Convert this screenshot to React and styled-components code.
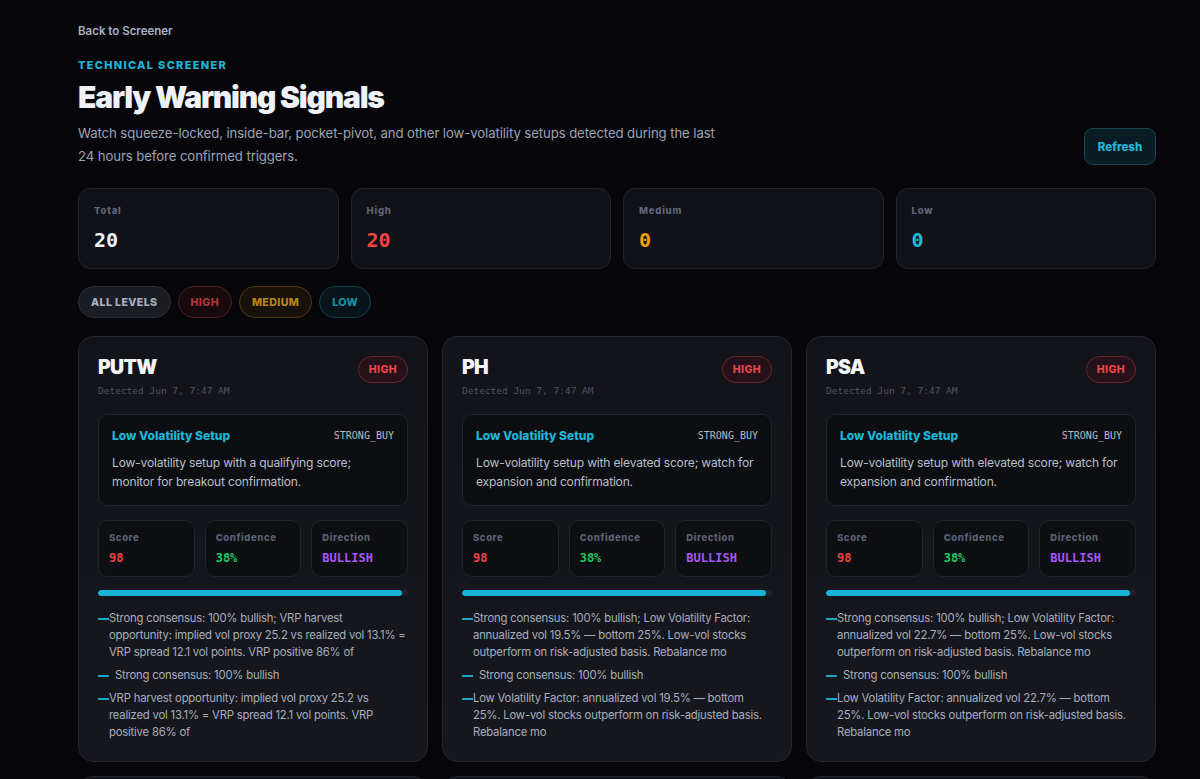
import React from 'react'
import styled, { createGlobalStyle } from 'styled-components'

const GlobalStyle = createGlobalStyle`
    * { box-sizing: border-box; }
    body {
        margin: 0;
        background: #07070b;
        font-family: Inter, "Noto Sans", sans-serif;
        color: #e6e9f0;
    }
`

const MONO = `"DejaVu Sans Mono", "Liberation Mono", monospace`

const stats = [
    { label: "Total", value: "20", color: "#eef1f6" },
    { label: "High", value: "20", color: "#ef4444" },
    { label: "Medium", value: "0", color: "#f59e0b" },
    { label: "Low", value: "0", color: "#22b8d6" },
]

const filters = [
    { label: "ALL LEVELS", tone: "all" },
    { label: "HIGH", tone: "high" },
    { label: "MEDIUM", tone: "medium" },
    { label: "LOW", tone: "low" },
]

const tones = {
    all: { bg: "#1b1d24", border: "#2b2e37", color: "#a9b1c1" },
    high: { bg: "#170b0e", border: "#4f1c22", color: "#b3343f" },
    medium: { bg: "#17110a", border: "#52380f", color: "#b98418" },
    low: { bg: "#08141a", border: "#10404b", color: "#1a8ea6" },
}

const lowVolReasons = vol => [
    `Strong consensus: 100% bullish; Low Volatility Factor: annualized vol ${vol}% — bottom 25%. Low-vol stocks outperform on risk-adjusted basis. Rebalance mo`,
    "  Strong consensus: 100% bullish",
    `Low Volatility Factor: annualized vol ${vol}% — bottom 25%. Low-vol stocks outperform on risk-adjusted basis. Rebalance mo`,
]

const signals = [
    {
        ticker: "PUTW",
        summary: "Low-volatility setup with a qualifying score; monitor for breakout confirmation.",
        reasons: [
            "Strong consensus: 100% bullish; VRP harvest opportunity: implied vol proxy 25.2 vs realized vol 13.1% = VRP spread 12.1 vol points. VRP positive 86% of",
            "  Strong consensus: 100% bullish",
            "VRP harvest opportunity: implied vol proxy 25.2 vs realized vol 13.1% = VRP spread 12.1 vol points. VRP positive 86% of",
        ],
    },
    {
        ticker: "PH",
        summary: "Low-volatility setup with elevated score; watch for expansion and confirmation.",
        reasons: lowVolReasons("19.5"),
    },
    {
        ticker: "PSA",
        summary: "Low-volatility setup with elevated score; watch for expansion and confirmation.",
        reasons: lowVolReasons("22.7"),
    },
    {
        ticker: "SPLV",
        summary: "Low-volatility setup with elevated score; watch for expansion and confirmation.",
        reasons: lowVolReasons("12.4"),
    },
    {
        ticker: "USMV",
        summary: "Low-volatility setup with elevated score; watch for expansion and confirmation.",
        reasons: lowVolReasons("13.0"),
    },
    {
        ticker: "KO",
        summary: "Low-volatility setup with elevated score; watch for expansion and confirmation.",
        reasons: lowVolReasons("15.8"),
    },
]

const App = () => {
    return (
        <Page>
            <GlobalStyle />
            <BackLink href="#">Back to Screener</BackLink>

            <Header>
                <div>
                    <Eyebrow>Technical Screener</Eyebrow>
                    <Title>Early Warning Signals</Title>
                    <Lead>
                        Watch squeeze-locked, inside-bar, pocket-pivot, and other low-volatility setups detected during the last 24 hours before confirmed triggers.
                    </Lead>
                </div>
                <RefreshButton>Refresh</RefreshButton>
            </Header>

            <StatGrid>
                {stats.map(stat => (
                    <StatCard key={stat.label}>
                        <StatLabel>{stat.label}</StatLabel>
                        <StatValue color={stat.color}>{stat.value}</StatValue>
                    </StatCard>
                ))}
            </StatGrid>

            <FilterRow>
                {filters.map(filter => (
                    <FilterPill key={filter.label} tone={filter.tone}>
                        {filter.label}
                    </FilterPill>
                ))}
            </FilterRow>

            <CardGrid>
                {signals.map(signal => (
                    <SignalCard key={signal.ticker}>
                        <CardHead>
                            <div>
                                <Ticker>{signal.ticker}</Ticker>
                                <Detected>Detected Jun 7, 7:47 AM</Detected>
                            </div>
                            <LevelBadge>HIGH</LevelBadge>
                        </CardHead>

                        <SetupBox>
                            <SetupTop>
                                <SetupName>Low Volatility Setup</SetupName>
                                <SetupAction>STRONG_BUY</SetupAction>
                            </SetupTop>
                            <SetupText>{signal.summary}</SetupText>
                        </SetupBox>

                        <MetricRow>
                            <Metric>
                                <MetricLabel>Score</MetricLabel>
                                <MetricValue color="#ef4444">98</MetricValue>
                            </Metric>
                            <Metric>
                                <MetricLabel>Confidence</MetricLabel>
                                <MetricValue color="#22c55e">38%</MetricValue>
                            </Metric>
                            <Metric>
                                <MetricLabel>Direction</MetricLabel>
                                <MetricValue color="#a855f7">BULLISH</MetricValue>
                            </Metric>
                        </MetricRow>

                        <Track>
                            <Fill style={{ width: "98%" }} />
                        </Track>

                        <Reasons>
                            {signal.reasons.map((reason, i) => (
                                <Reason key={i}>
                                    <Dash />
                                    <ReasonText>{reason}</ReasonText>
                                </Reason>
                            ))}
                        </Reasons>
                    </SignalCard>
                ))}
            </CardGrid>
        </Page>
    )
}

export default App

const Page = styled.div`
    width: 1078px;
    margin-left: 78px;
    padding-top: 19px;
    padding-bottom: 40px;
`

const BackLink = styled.a`
    display: inline-block;
    font-size: 11.5px;
    font-weight: 600;
    color: #aab2c2;
    text-decoration: none;
    line-height: 16px;
`

const Header = styled.div`
    display: flex;
    justify-content: space-between;
    align-items: flex-end;
    margin-top: 19px;
`

const Eyebrow = styled.div`
    font-size: 11px;
    font-weight: 800;
    letter-spacing: 1.3px;
    text-transform: uppercase;
    color: #1eb6d8;
    line-height: 14px;
`

const Title = styled.h1`
    margin: 7px 0 0;
    font-size: 30px;
    font-weight: 900;
    letter-spacing: -1.2px;
    line-height: 36px;
    color: #eef1f7;
`

const Lead = styled.p`
    margin: 7px 0 0;
    max-width: 650px;
    font-size: 13.2px;
    letter-spacing: -0.1px;
    line-height: 23px;
    color: #9aa3b4;
`

const RefreshButton = styled.button`
    width: 72px;
    height: 37px;
    margin-bottom: 3px;
    border-radius: 9px;
    border: 1px solid #1a4754;
    background: #0a1d24;
    color: #22b7d8;
    font-family: Inter, sans-serif;
    font-size: 11.5px;
    font-weight: 800;
    cursor: pointer;
`

const StatGrid = styled.div`
    display: grid;
    grid-template-columns: repeat(4, 1fr);
    gap: 12px;
    margin-top: 20px;
`

const StatCard = styled.div`
    height: 81px;
    padding: 16px 15px;
    border-radius: 12px;
    border: 1px solid #22242c;
    background: #111217;
`

const StatLabel = styled.div`
    font-size: 9.5px;
    font-weight: 800;
    letter-spacing: 0.8px;
    color: #5e6678;
    line-height: 12px;
`

const StatValue = styled.div`
    margin-top: 11px;
    font-family: ${MONO};
    font-size: 20px;
    font-weight: 700;
    line-height: 24px;
    color: ${p => p.color};
`

const FilterRow = styled.div`
    display: flex;
    gap: 7px;
    margin-top: 17px;
`

const FilterPill = styled.button`
    height: 32px;
    padding: 0 12px;
    border-radius: 999px;
    border: 1px solid ${p => tones[p.tone].border};
    background: ${p => tones[p.tone].bg};
    color: ${p => tones[p.tone].color};
    font-family: Inter, sans-serif;
    font-size: 10.6px;
    font-weight: 800;
    letter-spacing: 0.4px;
    cursor: pointer;
`

const CardGrid = styled.div`
    display: grid;
    grid-template-columns: repeat(3, 1fr);
    gap: 14px;
    margin-top: 18px;
`

const SignalCard = styled.div`
    padding: 18px 19px 20px;
    border-radius: 15px;
    border: 1px solid #24262e;
    background: linear-gradient(180deg, #13141a 0%, #17181e 100%);
`

const CardHead = styled.div`
    display: flex;
    justify-content: space-between;
    align-items: flex-start;
`

const Ticker = styled.div`
    font-size: 19.5px;
    font-weight: 900;
    letter-spacing: -0.7px;
    line-height: 24px;
    color: #f2f4f8;
`

const Detected = styled.div`
    margin-top: 5px;
    font-family: ${MONO};
    font-size: 9.5px;
    line-height: 14px;
    color: #4d5363;
`

const LevelBadge = styled.span`
    display: inline-flex;
    align-items: center;
    height: 27px;
    padding: 0 10px;
    margin-top: 1px;
    border-radius: 999px;
    border: 1px solid #6b252c;
    background: #26111a;
    color: #ef4444;
    font-size: 10.5px;
    font-weight: 800;
    letter-spacing: 0.4px;
`

const SetupBox = styled.div`
    margin-top: 16px;
    padding: 13px 12px 14px 13px;
    border-radius: 10px;
    border: 1px solid #23252d;
    background: #0d0e12;
`

const SetupTop = styled.div`
    display: flex;
    justify-content: space-between;
    align-items: center;
`

const SetupName = styled.span`
    font-size: 12px;
    font-weight: 800;
    color: #1eb6d8;
`

const SetupAction = styled.span`
    margin-right: 1px;
    font-family: ${MONO};
    font-size: 10px;
    color: #b4bccb;
`

const SetupText = styled.p`
    margin: 10px 0 0;
    font-size: 12.1px;
    letter-spacing: -0.2px;
    line-height: 19px;
    color: #b7bfcc;
`

const MetricRow = styled.div`
    display: grid;
    grid-template-columns: repeat(3, 1fr);
    gap: 10px;
    margin-top: 14px;
`

const Metric = styled.div`
    height: 57px;
    padding: 11px 10px;
    border-radius: 10px;
    border: 1px solid #22242b;
    background: #0e0f13;
`

const MetricLabel = styled.div`
    font-size: 9.5px;
    font-weight: 800;
    letter-spacing: 0.6px;
    line-height: 12px;
    color: #5a6274;
`

const MetricValue = styled.div`
    margin-top: 7px;
    font-family: ${MONO};
    font-size: 12px;
    font-weight: 700;
    line-height: 15px;
    color: ${p => p.color};
`

const Track = styled.div`
    height: 6px;
    margin-top: 13px;
    border-radius: 999px;
    background: #20222a;
    overflow: hidden;
`

const Fill = styled.div`
    height: 100%;
    border-radius: 999px;
    background: #16b4d6;
`

const Reasons = styled.ul`
    list-style: none;
    margin: 14px 0 0;
    padding: 0;
    display: flex;
    flex-direction: column;
    gap: 6px;
`

const Reason = styled.li`
    display: flex;
    align-items: flex-start;
`

const Dash = styled.span`
    flex: none;
    width: 11px;
    height: 2px;
    margin-top: 8px;
    background: #1aa7c8;
`

const ReasonText = styled.span`
    font-size: 11.3px;
    letter-spacing: -0.2px;
    line-height: 17px;
    color: #a6aebd;
    white-space: pre-wrap;
`
